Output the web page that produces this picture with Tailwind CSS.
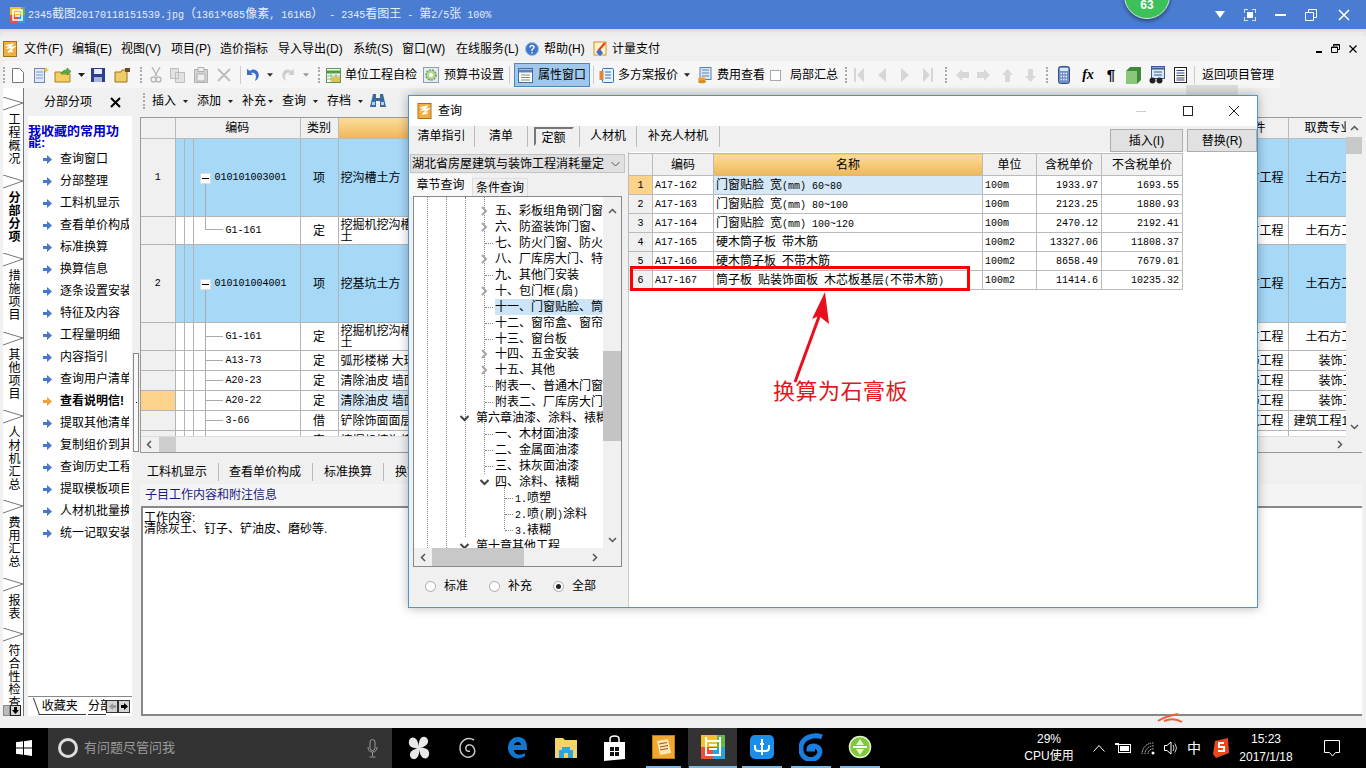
<!DOCTYPE html>
<html lang="zh">
<head>
    <meta charset="UTF-8">
    <title>2345看图王</title>
    <script src="https://cdn.jsdelivr.net/npm/@tailwindcss/browser@4"></script>
</head>
<body class="relative w-[1366px] h-[768px] overflow-hidden flex flex-col bg-[#f0f0f0] text-black text-[12px] leading-[16px] font-['Liberation_Sans','Noto_Sans_CJK_SC',sans-serif]">

    <!-- viewer title bar -->
    <div class="relative h-[29px] shrink-0 bg-[#4a7dd2] flex items-center pl-[10px] text-[#e6edfb]">
        <svg class="w-[15px] h-[16px] mr-[3px]" viewBox="0 0 15 16"><rect width="15" height="8" fill="#f3c12c"/><rect y="8" width="8" height="8" fill="#e8503c"/><rect x="8" y="8" width="7" height="8" fill="#2f9fe0"/><rect x="11" width="4" height="8" fill="#62b94a"/><path d="M3 3h9v10H3zM5 6h5M5 9h5" fill="none" stroke="#fff" stroke-width="1.5"/></svg>
        <span data-mix class="whitespace-pre">2345截图20170118151539.jpg（1361×685像素, 161KB） - 2345看图王 - 第2/5张 100%</span>
        <div class="ml-auto flex items-center h-full">
            <svg class="w-[10px] h-[7px] mr-[19px]" viewBox="0 0 10 7"><path d="M0 0h10L5 7z" fill="#fff"/></svg>
            <svg class="w-[12px] h-[12px] mr-[19px]" viewBox="0 0 12 12"><path d="M0 4V0h4M8 0h4v4M12 8v4H8M4 12H0V8" fill="none" stroke="#fff" stroke-width="1.5"/><rect x="3" y="3" width="6" height="6" fill="#fff"/></svg>
            <span class="w-[11px] h-[2px] bg-white mr-[19px]"></span>
            <svg class="w-[12px] h-[12px] mr-[21px]" viewBox="0 0 12 12"><path d="M3.500 3V.5h8v8H9M.5 3.500h8v8h-8z" fill="none" stroke="#fff"/></svg>
            <svg class="w-[12px] h-[12px] mr-[16px]" viewBox="0 0 12 12"><path d="M1 1l10 10M11 1L1 11" stroke="#fff" stroke-width="1.6"/></svg>
        </div>
    </div>
    <div class="h-[7px] shrink-0 bg-[#ececec] shadow-[inset_0_2px_3px_rgba(0,0,0,.08)]"></div>

    <!-- app window -->
    <div class="h-[692px] shrink-0 pl-[3px] pr-[4px] flex flex-col">
        <!-- menu -->
        <div class="h-[25px] shrink-0 flex items-center">
            <svg class="w-[14px] h-[16px]" viewBox="0 0 14 16"><rect x=".5" y=".5" width="13" height="15" fill="#f0b040" stroke="#a8701c"/><path d="M3 5l7-2-5 4 6-1-6 5 5-1" fill="none" stroke="#fff" stroke-width="1.5"/></svg>
            <span class="w-[7px]"></span>
            <span class="w-[48px]">文件(F)</span>
            <span class="w-[49px]">编辑(E)</span>
            <span class="w-[50px]">视图(V)</span>
            <span class="w-[49px]">项目(P)</span>
            <span class="w-[58px]">造价指标</span>
            <span class="w-[75px]">导入导出(D)</span>
            <span class="w-[49px]">系统(S)</span>
            <span class="w-[54px]">窗口(W)</span>
            <span class="w-[69px]">在线服务(L)</span>
            <svg class="w-[14px] h-[14px] mr-[5px]" viewBox="0 0 14 14"><circle cx="7" cy="7" r="6.5" fill="#3f76c8" stroke="#9dbbe8"/><path d="M5 5.500Q5 3.500 7 3.500T9 5.500Q9 6.500 7 7.500V9M7 10v1.500" fill="none" stroke="#fff" stroke-width="1.3"/></svg>
            <span class="w-[49px]">帮助(H)</span>
            <svg class="w-[16px] h-[16px] mr-[3px]" viewBox="0 0 16 16"><rect x="1" y="1" width="12" height="13" fill="#fff3c8" stroke="#d09030"/><path d="M12 2L5 10" stroke="#e04020" stroke-width="2"/><path d="M3 11l4 4 3-3-3-4z" fill="#3a70d0"/></svg>
            <span>计量支付</span>
            <div class="ml-auto mr-[5px] flex items-center gap-[9px]">
                <span class="w-[6px] h-[2px] mt-[6px] bg-black"></span>
                <svg class="w-[9px] h-[9px]" viewBox="0 0 9 9"><path d="M2.500 2V.5h6v5H7M.5 3h6v5.500h-6z" fill="none" stroke="#000"/><path d="M.5 3.500h6M2.500 1h6" stroke="#000"/></svg>
                <svg class="w-[8px] h-[8px]" viewBox="0 0 8 8"><path d="M.5.5l7 7M7.500.5l-7 7" stroke="#000" stroke-width="1.200"/></svg>
            </div>
        </div>

        <!-- main toolbar -->
        <div class="h-[27px] shrink-0 flex items-center w-[1277px] bg-[#f6f6f6] pt-[1px]">
            <span class="w-[3px] h-[16px] border-l-2 border-dotted border-[#aaa]"></span>
            <span class="w-[23px] flex justify-center"><svg class="w-[12px] h-[15px]" viewBox="0 0 12 15"><path d="M.5.5h7l4 4v10H.5z" fill="#fff" stroke="#777"/></svg></span>
            <span class="w-[23px] flex justify-center"><svg class="w-[16px] h-[16px]" viewBox="0 0 16 16"><rect x="1.500" y="1.500" width="10" height="14" fill="#dfe9f8" stroke="#6e86b0"/><path d="M3 5h7M3 8h7M3 11h7" stroke="#7f9cc8"/><path d="M13 0l1 2 2 1-2 1-1 2-1-2-2-1 2-1z" fill="#f5c030"/></svg></span>
            <span class="w-[22px] flex justify-center"><svg class="w-[18px] h-[16px]" viewBox="0 0 18 16"><path d="M1 5h6l1 2h8v8H1z" fill="#f3cf62" stroke="#a88020"/><path d="M7 7c1-3 3-4 6-4V1l4 3.500L13 8V6c-2 0-4 0-6 1z" fill="#58b040" stroke="#2e7a20" stroke-width=".6"/></svg></span>
            <span class="w-[14px] flex justify-center"><svg class="w-[7px] h-[4px]" viewBox="0 0 7 4"><path d="M0 0h7L3.500 4z" fill="#222"/></svg></span>
            <span class="w-[20px] flex justify-center"><svg class="w-[14px] h-[14px]" viewBox="0 0 14 14"><path d="M0 0h14v14H0z" fill="#2a3f90"/><rect x="3" y="1" width="8" height="5" fill="#e8ecf8"/><rect x="3" y="9" width="8" height="5" fill="#a8b4d8"/></svg></span>
            <span class="w-[28px] flex justify-center"><svg class="w-[17px] h-[15px]" viewBox="0 0 17 15"><path d="M1 4h6l1-2h5v12H1z" fill="#f0cc68" stroke="#9a7418"/><path d="M11 0h5v4h-5z" fill="#6a4c20"/></svg></span>
            <span class="w-[10px] flex justify-center"><span class="h-[16px] border-l-2 border-dotted border-[#aaa]"></span></span>
            <span class="w-[20px] flex justify-center"><svg class="w-[12px] h-[16px]" viewBox="0 0 12 16"><path d="M2 0l5 9M10 0L5 9" stroke="#b8b8b8" stroke-width="1.400"/><circle cx="3.500" cy="12.500" r="2.500" fill="none" stroke="#b8b8b8" stroke-width="1.400"/><circle cx="8.500" cy="12.500" r="2.500" fill="none" stroke="#b8b8b8" stroke-width="1.400"/></svg></span>
            <span class="w-[23px] flex justify-center"><svg class="w-[15px] h-[15px]" viewBox="0 0 15 15"><path d="M.5.5h8v10h-8zM5.500 4.500h9v10h-9z" fill="#e2e2e2" stroke="#bdbdbd"/></svg></span>
            <span class="w-[23px] flex justify-center"><svg class="w-[14px] h-[16px]" viewBox="0 0 14 16"><path d="M.5 2.500h13v13H.5z" fill="#d4d4d4" stroke="#b0b0b0"/><path d="M4 .5h6v4H4zM3 7h8v7H3z" fill="#eee" stroke="#b0b0b0"/></svg></span>
            <span class="w-[24px] flex justify-center"><svg class="w-[14px] h-[14px]" viewBox="0 0 14 14"><path d="M1 1l12 12M13 1L1 13" stroke="#bcbcbc" stroke-width="1.800"/></svg></span>
            <span class="w-[8px] flex justify-center"><span class="h-[18px] border-l border-[#ccc]"></span></span>
            <span class="w-[18px] flex justify-center"><svg class="w-[14px] h-[14px]" viewBox="0 0 14 14"><path d="M1 1v6h6L5 5c3-1 5 1 5 4l-1 4c4-2 5-7 2-10-2-2-5-2-7 0z" fill="#3a6fc8"/></svg></span>
            <span class="w-[16px] flex justify-center"><svg class="w-[6px] h-[4px]" viewBox="0 0 7 4"><path d="M0 0h7L3.500 4z" fill="#333"/></svg></span>
            <span class="w-[19px] flex justify-center"><svg class="w-[14px] h-[14px]" viewBox="0 0 14 14"><path d="M13 1v6H7l2-2C6 4 4 6 4 9l1 4C1 11 0 6 3 3c2-2 5-2 7 0z" fill="#cfcfcf"/></svg></span>
            <span class="w-[17px] flex justify-center"><svg class="w-[6px] h-[4px]" viewBox="0 0 7 4"><path d="M0 0h7L3.500 4z" fill="#999"/></svg></span>
            <span class="w-[10px] flex justify-center"><span class="h-[16px] border-l-2 border-dotted border-[#aaa]"></span></span>
            <span class="w-[18px] flex justify-center"><svg class="w-[15px] h-[15px]" viewBox="0 0 15 15"><rect x=".5" y=".5" width="14" height="14" fill="#fff" stroke="#5a9a50"/><path d="M.5 4h14" stroke="#4a9a40" stroke-width="3"/><path d="M5 4v10M10 4v10M1 8h13M1 11h13" stroke="#88b880"/><rect x="6" y="9" width="8" height="5" fill="#e4c050"/></svg></span>
            <span class="ml-[3px] w-[72px] whitespace-nowrap">单位工程自检</span>
            <span class="ml-[2px] w-[24px] flex justify-center"><svg class="w-[16px] h-[16px]" viewBox="0 0 16 16"><rect x=".5" y=".5" width="15" height="15" fill="#e4eef0" stroke="#8aa0a8"/><circle cx="8" cy="8" r="5" fill="#bcd890" stroke="#6a9a70" stroke-width="1.500" stroke-dasharray="2 1"/><circle cx="8" cy="8" r="2" fill="#fff"/></svg></span>
            <span class="ml-[1px] w-[60px] whitespace-nowrap">预算书设置</span>
            <span class="w-[10px] flex justify-center"><span class="h-[18px] border-l border-[#ccc]"></span></span>
            <span class="w-[76px] h-[24px] flex items-center bg-[#9fc8ec] border border-[#4a88c0] pl-[3px]">
                <svg class="w-[15px] h-[15px] mr-[5px]" viewBox="0 0 15 15"><rect x=".5" y=".5" width="14" height="14" fill="#fff" stroke="#4a6a9a"/><path d="M1 3h13" stroke="#5a80c0" stroke-width="3"/><path d="M3 7h9M3 9.500h9M3 12h9" stroke="#8a8a70"/></svg>
                <span>属性窗口</span>
            </span>
            <span class="w-[7px] flex justify-center"><span class="h-[18px] border-l border-[#ccc]"></span></span>
            <span class="w-[18px] flex justify-center"><svg class="w-[15px] h-[15px]" viewBox="0 0 15 15"><rect x="3.500" y=".5" width="11" height="14" rx="1" fill="#eaf2fb" stroke="#2f6fc0"/><path d="M6 4h6M6 7h6M6 10h6" stroke="#2f6fc0"/><rect x=".5" y="3" width="4" height="9" fill="#e0883a"/></svg></span>
            <span class="ml-[3px] w-[62px] whitespace-nowrap">多方案报价</span>
            <span class="w-[14px] flex justify-center"><svg class="w-[6px] h-[4px]" viewBox="0 0 7 4"><path d="M0 0h7L3.500 4z" fill="#222"/></svg></span>
            <span class="ml-[1px] w-[18px] flex justify-center"><svg class="w-[15px] h-[17px]" viewBox="0 0 15 17"><rect x="3" y=".5" width="11" height="12" fill="#dce8f6" stroke="#5a80b0"/><path d="M5 3h7M5 6h7M5 9h7" stroke="#5a80b0"/><ellipse cx="5" cy="12" rx="4" ry="1.800" fill="#e8a830"/><ellipse cx="5" cy="14.500" rx="4" ry="1.800" fill="#d89020"/></svg></span>
            <span class="ml-[4px] w-[48px] whitespace-nowrap">费用查看</span>
            <span class="ml-[5px] w-[11px] h-[11px] border border-[#aaa] bg-white"></span>
            <span class="ml-[9px] w-[48px] whitespace-nowrap">局部汇总</span>
            <span class="ml-[7px] w-[7px] h-[16px] border-l-2 border-dotted border-[#aaa]"></span>
            <span class="w-[13px] flex justify-center"><svg class="w-[11px] h-[14px]" viewBox="0 0 11 14"><path d="M1 0h2v14H1zM11 0v14L4 7z" fill="#d6d6d6"/></svg></span>
            <span class="w-[24px] ml-[5px] flex justify-center"><svg class="w-[8px] h-[14px]" viewBox="0 0 8 14"><path d="M8 0v14L0 7z" fill="#d6d6d6"/></svg></span>
            <span class="w-[22px] flex justify-center"><svg class="w-[8px] h-[14px]" viewBox="0 0 8 14"><path d="M0 0v14l8-7z" fill="#d6d6d6"/></svg></span>
            <span class="w-[24px] flex justify-center"><svg class="w-[11px] h-[14px]" viewBox="0 0 11 14"><path d="M8 0h2v14H8zM0 0v14l7-7z" fill="#d6d6d6"/></svg></span>
            <span class="w-[12px] flex justify-center"><span class="h-[16px] border-l-2 border-dotted border-[#aaa]"></span></span>
            <span class="w-[20px] flex justify-center"><svg class="w-[13px] h-[12px]" viewBox="0 0 13 12"><path d="M0 6l6-6v3h7v6H6v3z" fill="#d8d8d8"/></svg></span>
            <span class="w-[23px] flex justify-center"><svg class="w-[13px] h-[12px]" viewBox="0 0 13 12"><path d="M13 6L7 0v3H0v6h7v3z" fill="#d8d8d8"/></svg></span>
            <span class="w-[24px] flex justify-center"><svg class="w-[11px] h-[13px]" viewBox="0 0 11 13"><path d="M5.500 0L11 6H8v7H3V6H0z" fill="#d8d8d8"/></svg></span>
            <span class="w-[22px] flex justify-center"><svg class="w-[11px] h-[13px]" viewBox="0 0 11 13"><path d="M5.500 13L11 7H8V0H3v7H0z" fill="#d8d8d8"/></svg></span>
            <span class="w-[12px] flex justify-center"><span class="h-[16px] border-l-2 border-dotted border-[#aaa]"></span></span>
            <span class="w-[22px] flex justify-center"><svg class="w-[12px] h-[18px]" viewBox="0 0 12 18"><rect x=".5" y=".5" width="11" height="17" rx="2" fill="#6e8fc8" stroke="#34507e"/><rect x="2" y="2" width="8" height="3" fill="#d8e6f8"/><path d="M2.500 7.500h7M2.500 10.500h7M2.500 13.500h7" stroke="#e8eefc" stroke-width="1.500" stroke-dasharray="1.500 1"/></svg></span>
            <span class="ml-[1px] w-[24px] flex justify-center font-['Liberation_Serif',serif] italic font-bold text-[14px]">fx</span>
            <span class="w-[22px] flex justify-center font-bold text-[15px]">¶</span>
            <span class="w-[23px] flex justify-center"><svg class="w-[15px] h-[17px]" viewBox="0 0 15 17"><path d="M4 0h11v13l-4 4H0V4z" fill="#3e8a3a"/><rect y="4" width="11" height="13" fill="#88c878"/></svg></span>
            <span class="w-[24px] flex justify-center"><svg class="w-[16px] h-[18px]" viewBox="0 0 16 18"><rect x="2.500" y=".5" width="13" height="12" fill="#dce8f8" stroke="#3a5a9a"/><path d="M3 2.500h12" stroke="#3a5a9a" stroke-width="2"/><path d="M5 6h8M5 9h8" stroke="#3a5a9a"/><circle cx="3.500" cy="14.500" r="3" fill="#222"/><circle cx="10.500" cy="14.500" r="3" fill="#222"/></svg></span>
            <span class="w-[22px] flex justify-center"><svg class="w-[13px] h-[16px]" viewBox="0 0 13 16"><rect x=".5" y=".5" width="12" height="15" fill="#fff" stroke="#222"/><path d="M2.500 3.500h8M2.500 6h8M2.500 8.500h8M2.500 11h8M2.500 13h8" stroke="#2a3f90"/></svg></span>
            <span class="w-[8px] ml-[3px] h-[18px] border-l border-[#ccc]"></span>
            <span class="whitespace-nowrap">返回项目管理</span>
        </div>

        <div class="relative flex flex-1 min-h-0">
            <!-- vertical tabs -->
            <div class="w-[21px] shrink-0 h-[628px] bg-white border-r border-[#777] pt-[9px] overflow-hidden" id="sideTabs"></div>
            <span class="w-[4px] shrink-0"></span>

            <!-- scroll buttons over the bottom of the tab strip -->
            <div class="absolute left-0 top-[617px] flex">
                <span class="w-[7px] h-[11px] bg-[#bbb] border border-[#888]"></span>
                <span class="w-[11px] h-[11px] bg-[#d4d4d4] border border-[#222] flex items-center justify-center"><svg class="w-[7px] h-[7px]" viewBox="0 0 7 7"><path d="M3.500 7L0 3h2V0h3v3h2z" fill="#000"/></svg></span>
            </div>

            <!-- favourites panel -->
            <div class="w-[104px] shrink-0 flex flex-col h-[628px]">
                <div class="h-[28px] shrink-0 flex items-center pl-[16px]">
                    <span>分部分项</span>
                    <svg class="ml-[18px] w-[11px] h-[11px]" viewBox="0 0 11 11"><path d="M1 1l9 9M10 1l-9 9" stroke="#000" stroke-width="2"/></svg>
                </div>
                <div class="flex-1 bg-white pt-[9px] flex flex-col overflow-hidden">
                    <div class="h-[23px] shrink-0 overflow-hidden text-[13px] leading-[12px] font-bold text-[#0000c8]">我收藏的常用功能:</div>
                    <div id="favList" class="flex-1"></div>
                    <div class="h-[20px] shrink-0 flex items-center pl-[8px] border-t border-[#888]">
                        <span class="relative whitespace-nowrap px-[5px] border-b border-l border-[#333] skew-x-[20deg] bg-white"><span class="block skew-x-[-20deg]">收藏夹</span></span>
                        <span class="ml-[5px] w-[18px] overflow-hidden whitespace-nowrap border-b border-[#333]">分部分项</span>
                        <span class="w-[12px] h-[13px] bg-[#d4d4d4] border border-[#333] flex items-center justify-center"><svg class="w-[7px] h-[7px]" viewBox="0 0 7 7"><path d="M0 3.500L4 0v2h3v3H4v2z" fill="#999"/></svg></span>
                        <span class="w-[12px] h-[13px] bg-[#d4d4d4] border border-[#333] flex items-center justify-center"><svg class="w-[7px] h-[7px]" viewBox="0 0 7 7"><path d="M7 3.500L3 0v2H0v3h3v2z" fill="#000"/></svg></span>
                    </div>
                </div>
            </div>

            <!-- splitter -->
            <div class="w-[8px] shrink-0 pt-[265px] pl-[1px]">
                <div class="w-[6px] h-[99px] bg-[#f8f8f8] border border-[#888] flex items-center justify-center"><span class="w-[1px] h-[1px] bg-black"></span></div>
            </div>

            <!-- content -->
            <div class="w-[1222px] shrink-0 flex flex-col">
                <div class="h-[29px] shrink-0 flex items-center pb-[3px]">
                    <span class="w-[3px] h-[16px] ml-[3px] border-l-2 border-dotted border-[#aaa]"></span>
                    <span class="ml-[6px]">插入</span>
                    <svg class="ml-[7px] w-[5px] h-[3px]" viewBox="0 0 7 4"><path d="M0 0h7L3.500 4z" fill="#222"/></svg>
                    <span class="ml-[9px]">添加</span>
                    <svg class="ml-[7px] w-[5px] h-[3px]" viewBox="0 0 7 4"><path d="M0 0h7L3.500 4z" fill="#222"/></svg>
                    <span class="ml-[9px]">补充</span>
                    <svg class="ml-[2px] w-[5px] h-[3px]" viewBox="0 0 7 4"><path d="M0 0h7L3.500 4z" fill="#222"/></svg>
                    <span class="ml-[9px]">查询</span>
                    <svg class="ml-[7px] w-[5px] h-[3px]" viewBox="0 0 7 4"><path d="M0 0h7L3.500 4z" fill="#222"/></svg>
                    <span class="ml-[9px]">存档</span>
                    <svg class="ml-[7px] w-[5px] h-[3px]" viewBox="0 0 7 4"><path d="M0 0h7L3.500 4z" fill="#222"/></svg>
                    <svg class="ml-[7px] w-[16px] h-[14px]" viewBox="0 0 16 14"><path d="M3 0h3v4h4V0h3l3 13h-6V7H6v6H0z" fill="#3a6a9a"/><path d="M2 8h3v3H2zM11 8h3v3h-3z" fill="#b8d0e8"/></svg>
                </div>

                <!-- main grid -->
                <div class="h-[336px] shrink-0 flex border-t border-l border-b border-[#999]">
                    <div class="w-[1205px] flex flex-col">
                        <div class="h-[318px] overflow-hidden">
                            <table class="table-fixed border-collapse w-[1205px]">
                                <colgroup>
                                    <col class="w-[34px]"><col class="w-[9px]"><col class="w-[9px]"><col class="w-[107px]"><col class="w-[38px]"><col class="w-[812px]"><col class="w-[138px]"><col class="w-[58px]">
                                </colgroup>
                                <thead>
                                    <tr class="h-[20px] bg-[#f0f0f0]">
                                        <th class="font-normal border-r border-b border-[#bbb]"></th>
                                        <th class="font-normal border-b border-[#bbb]" colspan="2"></th>
                                        <th class="font-normal border-r border-b border-[#bbb] pr-[18px] pt-[1px]">编码</th>
                                        <th class="font-normal border-r border-b border-[#bbb] pt-[1px]">类别</th>
                                        <th class="font-normal border-r border-b border-[#bbb] pt-[1px] bg-gradient-to-b from-[#fbdc98] to-[#f0b75a]">名称</th>
                                        <th class="font-normal border-r border-b border-[#bbb] pt-[1px] text-right pr-[22px]">取费文件</th>
                                        <th class="font-normal border-b border-[#bbb] pt-[1px] text-left pl-[16px] whitespace-nowrap overflow-hidden">取费专业</th>
                                    </tr>
                                </thead>
                                <tbody id="mainRows"></tbody>
                            </table>
                        </div>
                        <div class="flex-1 flex items-center bg-[#f0f0f0] border-t border-[#ddd]">
                            <svg class="ml-[5px] w-[6px] h-[9px]" viewBox="0 0 6 9"><path d="M5 1L1.500 4.500 5 8" fill="none" stroke="#555" stroke-width="1.500"/></svg>
                            <span class="ml-[7px] w-[17px] h-full bg-[#cdcdcd]"></span>
                            <svg class="ml-auto mr-[3px] w-[6px] h-[9px]" viewBox="0 0 6 9"><path d="M1 1l3.500 3.500L1 8" fill="none" stroke="#555" stroke-width="1.500"/></svg>
                        </div>
                    </div>
                    <div class="w-[16px] bg-[#f0f0f0] flex flex-col items-center pt-[7px]">
                        <svg class="w-[9px] h-[6px]" viewBox="0 0 9 6"><path d="M1 5l3.500-3.500L8 5" fill="none" stroke="#555" stroke-width="1.500"/></svg>
                        <span class="mt-[6px] w-full h-[17px] bg-[#c8c8c8]"></span>
                        <svg class="mt-[270px] w-[9px] h-[6px]" viewBox="0 0 9 6"><path d="M1 1l3.500 3.500L8 1" fill="none" stroke="#555" stroke-width="1.500"/></svg>
                    </div>
                </div>

                <!-- detail tabs -->
                <div class="h-[31px] shrink-0 flex items-center pt-[7px]">
                    <span class="pl-[7px] pr-[11px] border-r border-[#bbb] h-[18px] leading-[18px]">工料机显示</span>
                    <span class="pl-[10px] pr-[11px] border-r border-[#bbb] h-[18px] leading-[18px]">查看单价构成</span>
                    <span class="pl-[11px] pr-[11px] border-r border-[#bbb] h-[18px] leading-[18px]">标准换算</span>
                    <span class="pl-[11px]">换算信息</span>
                </div>
                <div class="h-[22px] shrink-0 flex items-center pl-[5px] bg-[#f4f4f4] text-[#1a1a80]">子目工作内容和附注信息</div>
                <div class="h-[210px] shrink-0 ml-[1px] bg-white border-t-2 border-l-2 border-b-2 border-[#888] text-[12px] leading-[11px] pt-[5px] pl-[1px]">
                    <div>工作内容:</div>
                    <div>清除灰土、钉子、铲油皮、磨砂等.</div>
                </div>
            </div>
        </div>
    </div>

    <!-- taskbar -->
    <div class="h-[40px] shrink-0 bg-black flex items-stretch text-white">
        <div class="w-[48px] flex items-center justify-center">
            <svg class="w-[16px] h-[16px]" viewBox="0 0 16 16"><path d="M0 2.300l7-1v6.200H0zM8 1.200L16 0v7.500H8zM0 8.500h7v6.200l-7-1zM8 8.500h8V16l-8-1.200z" fill="#fff"/></svg>
        </div>
        <div class="w-[344px] bg-[#333] flex items-center pl-[10px] text-[#9a9a9a]">
            <span class="w-[20px] h-[20px] rounded-full border-[3px] border-[#ddd]"></span>
            <span class="ml-[6px] text-[13px]">有问题尽管问我</span>
            <svg class="ml-auto mr-[14px] w-[11px] h-[19px]" viewBox="0 0 11 19"><rect x="3" y=".5" width="5" height="11" rx="2.500" fill="none" stroke="#999"/><path d="M1 8q0 5 4.500 5T10 8M5.500 13v4M2.500 18h6" fill="none" stroke="#999"/></svg>
        </div>
        <span class="w-[2px]"></span>
        <span class="w-[49px] flex items-center justify-center"><svg class="w-[22px] h-[24px]" viewBox="0 0 22 24"><path d="M11 12C4 13 0 10 1 5s9-6 10 7zM11 12c7-1 11 2 10 7s-9 6-10-7zM11 12C10 5 13 0 17 1s6 9-6 11zM11 12c1 7-2 12-6 11s-6-9 6-11z" fill="#e8e8e8"/></svg></span>
        <span class="w-[49px] flex items-center justify-center"><svg class="w-[20px] h-[24px]" viewBox="0 0 20 24"><path d="M16 4C9 0 2 5 2 12s6 10 10 9 6-5 4-9-7-4-8-1 1 5 4 4" fill="none" stroke="#ccc" stroke-width="1.500"/></svg></span>
        <span class="w-[49px] flex items-center justify-center"><svg class="w-[20px] h-[24px]" viewBox="0 0 20 24"><path d="M18 20c-3 2-7 3-10 2S1 17 1 12 4 1 11 1s9 5 9 11v2H7c0 5 7 6 11 3zM7 9h7c0-4-6-4-7 0z" fill="#0f78d4"/></svg></span>
        <span class="w-[49px] flex items-center justify-center"><svg class="w-[22px] h-[20px]" viewBox="0 0 22 20"><path d="M0 0h8l2 2h12v18H0z" fill="#f4d36a"/><path d="M7 9h8v3h3v8H4v-8h3z" fill="#2ea6dc"/><rect x="9" y="15" width="4" height="5" fill="#f4d36a"/></svg></span>
        <span class="w-[49px] flex items-center justify-center"><svg class="w-[21px] h-[26px]" viewBox="0 0 21 26"><path d="M0 7h21v17l-21 2z" fill="#fff"/><path d="M6 8V4q0-3 4.500-3T15 4v4" fill="none" stroke="#fff" stroke-width="1.500"/><path d="M6 12h4v4H6zM11 12h4v4h-4zM6 17h4v4H6zM11 17h4v4h-4z" fill="#111"/></svg></span>
        <span class="w-[49px] flex flex-col items-center"><span class="flex-1 flex items-center"><svg class="w-[23px] h-[24px]" viewBox="0 0 23 24"><rect x=".5" y=".5" width="22" height="23" fill="#f0a830" stroke="#c07810"/><path d="M5 6l11-2 3 14-11 2z" fill="#fbe9b4"/><path d="M7 9l8-1.500M8 12l8-1.500M8 15l8-1.500" stroke="#b04a20"/></svg></span><span class="w-[35px] h-[2px] bg-[#7ab8e8]"></span></span>
        <span class="w-[49px] flex flex-col items-center bg-[#333]"><span class="flex-1 flex items-center"><svg class="w-[24px] h-[24px]" viewBox="0 0 24 24"><rect width="24" height="12" fill="#f3c12c"/><rect y="12" width="12" height="12" fill="#e8503c"/><rect x="12" y="12" width="12" height="12" fill="#2f9fe0"/><rect x="16" width="8" height="12" fill="#62b94a"/><path d="M5 2v4h14V2M5 6v14h14V6M8 10h8M8 14h8" fill="none" stroke="#fff" stroke-width="2"/></svg></span><span class="w-[48px] h-[2px] bg-[#7ab8e8]"></span></span>
        <span class="w-[49px] flex flex-col items-center"><span class="flex-1 flex items-center"><svg class="w-[24px] h-[24px]" viewBox="0 0 24 24"><rect width="24" height="24" rx="5" fill="#1a8ee8"/><path d="M12 4v16M5 10v3q0 3 3.500 3h7Q19 16 19 13v-3M12 9h-2M12 9h2" fill="none" stroke="#fff" stroke-width="2"/></svg></span><span class="w-[40px] h-[2px] bg-[#7ab8e8]"></span></span>
        <span class="w-[49px] flex flex-col items-center"><span class="flex-1 flex items-center"><svg class="w-[24px] h-[28px]" viewBox="0 0 24 28"><path d="M23 4C15 1 3 4 2 14s7 14 13 12 8-9 3-12c-3-2-8-1-8 2h6" fill="none" stroke="#1a7ee0" stroke-width="5"/></svg></span><span class="w-[40px] h-[2px] bg-[#7ab8e8]"></span></span>
        <span class="w-[49px] flex flex-col items-center"><span class="flex-1 flex items-center"><svg class="w-[24px] h-[26px]" viewBox="0 0 24 26"><circle cx="12" cy="13" r="10.500" fill="#7ec83c" stroke="#e4f4cc" stroke-width="1.500"/><path d="M5 13h14" stroke="#fff" stroke-width="2"/><path d="M12 5l4 6H8zM12 21l-4-6h8z" fill="#e4f4cc"/></svg></span><span class="w-[40px] h-[2px] bg-[#7ab8e8]"></span></span>

        <div class="ml-auto flex items-center">
            <div class="w-[70px] flex flex-col items-center leading-[17px] text-[12px] pr-[10px]"><span>29%</span><span>CPU使用</span></div>
            <span class="w-[20px] flex justify-center"><svg class="w-[12px] h-[7px]" viewBox="0 0 12 7"><path d="M.5 6.500l5.500-6 5.500 6" fill="none" stroke="#fff"/></svg></span>
            <span class="w-[24px] ml-[2px] flex justify-center"><svg class="w-[16px] h-[12px]" viewBox="0 0 16 12"><rect x="3.500" y="2.500" width="12" height="8" fill="none" stroke="#fff"/><rect x="5" y="4" width="9" height="5" fill="#fff"/><path d="M0 1h4v2H0" fill="#fff"/></svg></span>
            <span class="w-[24px] ml-[1px] flex justify-center"><svg class="w-[14px] h-[13px]" viewBox="0 0 14 13"><path d="M1 12a11 11 0 0 1 12-11M4 12a8 8 0 0 1 9-8M7 12a5 5 0 0 1 6-5" fill="none" stroke="#ccc" stroke-dasharray="1.500 .8"/><circle cx="12" cy="11" r="1.500" fill="#fff"/></svg></span>
            <span class="w-[22px] flex justify-center"><svg class="w-[15px] h-[14px]" viewBox="0 0 15 14"><path d="M.5 4.500H3L7 1v12L3 9.500H.5z" fill="none" stroke="#fff"/><path d="M9 4q2 3 0 6M11 2.500q3 4.500 0 9" fill="none" stroke="#ccc"/></svg></span>
            <span class="w-[24px] text-center text-[14px]">中</span>
            <span class="w-[29px] flex justify-center"><svg class="w-[16px] h-[20px]" viewBox="0 0 16 20"><path d="M2 3l13-3 1 15-13 5-3-4z" fill="#e8481c"/><path d="M11 5H6v4h5v4H5" fill="none" stroke="#fff" stroke-width="2"/></svg></span>
            <div class="w-[62px] flex flex-col items-center leading-[18px] text-[12px]"><span>15:23</span><span>2017/1/18</span></div>
            <span class="w-[69px] flex justify-center"><svg class="w-[16px] h-[17px]" viewBox="0 0 16 17"><path d="M.5.5h15v12h-4l-3 3.500-3-3.500h-5z" fill="none" stroke="#fff"/></svg></span>
        </div>
    </div>

    <!-- badge sitting over the viewer title bar -->
    <div class="absolute left-[1124px] top-[-27px] w-[46px] h-[46px] rounded-full bg-[#3cc05a] border border-[#d8e8d8] shadow-[0_2px_4px_rgba(0,0,0,.45)] flex items-end justify-center pb-[5px] text-white font-bold text-[12px]">63</div>
    <div class="absolute left-[1186px] top-[85px] w-[52px] h-[10px] bg-[#dcdcdc]"></div>

    <!-- query dialog -->
    <div class="absolute left-[408px] top-[95px] w-[850px] h-[513px] bg-white border border-[#4f94cf] shadow-[0_0_10px_rgba(0,0,0,.3)] flex flex-col">
        <div class="h-[30px] shrink-0 flex items-center pl-[7px]">
            <svg class="w-[17px] h-[16px]" viewBox="0 0 14 16"><rect x=".5" y=".5" width="13" height="15" fill="#f0b040" stroke="#a8701c"/><path d="M3 5l7-2-5 4 6-1-6 5 5-1" fill="none" stroke="#fff" stroke-width="1.500"/></svg>
            <span class="ml-[5px]">查询</span>
            <div class="ml-auto flex items-center">
                <span class="w-[10px] h-[1px] bg-[#ccc] mr-[37px]"></span>
                <span class="w-[10px] h-[10px] border border-[#222] mr-[36px]"></span>
                <svg class="w-[10px] h-[10px] mr-[18px]" viewBox="0 0 10 10"><path d="M0 0l10 10M10 0L0 10" stroke="#222"/></svg>
            </div>
        </div>
        <div class="h-[26px] shrink-0 bg-[#f0f0f0] flex items-start">
            <span class="w-[66px] h-[21px] leading-[20px] text-center border-r border-[#bbb]">清单指引</span>
            <span class="w-[53px] h-[21px] leading-[20px] text-center border-r border-[#bbb]">清单</span>
            <span class="w-[52px] h-[21px] flex items-center justify-center border-r border-[#bbb]"><span class="w-[40px] h-[19px] leading-[18px] text-center border-2 border-t-[#777] border-l-[#777] border-r-[#eee] border-b-[#eee]">定额</span></span>
            <span class="w-[57px] h-[21px] leading-[20px] text-center border-r border-[#bbb]">人材机</span>
            <span class="w-[83px] h-[21px] leading-[20px] text-center border-r border-[#bbb]">补充人材机</span>
            <span class="ml-auto w-[73px] h-[23px] leading-[22px] mt-[3px] text-center bg-[#e1e1e1] border border-[#adadad]">插入(I)</span>
            <span class="ml-[4px] w-[70px] h-[23px] leading-[22px] mt-[3px] text-center bg-[#e1e1e1] border border-[#adadad]">替换(R)</span>
        </div>
        <div class="flex-1 flex min-h-0">
            <!-- left pane -->
            <div class="w-[220px] shrink-0 bg-[#f0f0f0] flex flex-col border-r border-[#ccc]">
                <div class="h-[19px] mt-[2px] ml-[1px] w-[215px] shrink-0 bg-[#e0e0e0] border border-[#c4c4c4] flex items-center pl-[1px] whitespace-nowrap overflow-hidden">
                    <span>湖北省房屋建筑与装饰工程消耗量定</span>
                    <svg class="ml-auto mr-[4px] w-[9px] h-[6px] shrink-0" viewBox="0 0 9 6"><path d="M.5 1l4 4 4-4" fill="none" stroke="#555"/></svg>
                </div>
                <div class="h-[23px] shrink-0 flex items-end">
                    <span class="w-[63px] h-[22px] leading-[23px] text-center bg-[#f8f8f8]">章节查询</span>
                    <span class="w-[56px] h-[18px] leading-[19px] text-center border border-b-0 border-[#ddd]">条件查询</span>
                </div>
                <div class="ml-[4px] w-[209px] h-[371px] shrink-0 bg-white border border-[#888] flex flex-col">
                    <div class="flex-1 flex min-h-0">
                        <div id="tree" class="relative w-[189px] overflow-hidden pt-[6px]">
                            <span class="absolute left-[13px] top-0 h-full border-l border-dotted border-[#888]"></span>
                            <span class="absolute left-[32px] top-0 h-full border-l border-dotted border-[#888]"></span>
                            <span class="absolute left-[51px] top-0 h-[340px] border-l border-dotted border-[#888]"></span>
                            <span class="absolute left-[70px] top-0 h-[277px] border-l border-dotted border-[#888]"></span>
                            <span class="absolute left-[90px] top-[290px] h-[42px] border-l border-dotted border-[#888]"></span>
                        </div>
                        <div class="flex-1 bg-[#f0f0f0] flex flex-col items-center pt-[11px]">
                            <svg class="w-[9px] h-[6px]" viewBox="0 0 9 6"><path d="M1 5l3.500-3.500L8 5" fill="none" stroke="#555" stroke-width="1.500"/></svg>
                            <span class="mt-[137px] w-full h-[90px] bg-[#c4c4c4]"></span>
                            <svg class="mt-[96px] w-[9px] h-[6px]" viewBox="0 0 9 6"><path d="M1 1l3.500 3.500L8 1" fill="none" stroke="#555" stroke-width="1.500"/></svg>
                        </div>
                    </div>
                    <div class="h-[18px] shrink-0 bg-[#f0f0f0] flex items-center pr-[23px]">
                        <svg class="ml-[6px] w-[6px] h-[9px]" viewBox="0 0 6 9"><path d="M5 1L1.500 4.500 5 8" fill="none" stroke="#555" stroke-width="1.500"/></svg>
                        <span class="ml-[6px] w-[92px] h-full bg-[#c8c8c8]"></span>
                        <svg class="ml-auto w-[6px] h-[9px]" viewBox="0 0 6 9"><path d="M1 1l3.500 3.500L1 8" fill="none" stroke="#555" stroke-width="1.500"/></svg>
                    </div>
                </div>
                <div class="flex-1 flex items-center pl-[16px] pb-[2px]">
                    <span class="w-[11px] h-[11px] rounded-full border border-[#aaa] bg-white"></span>
                    <span class="ml-[8px] w-[45px]">标准</span>
                    <span class="w-[11px] h-[11px] rounded-full border border-[#aaa] bg-white"></span>
                    <span class="ml-[8px] w-[45px]">补充</span>
                    <span class="w-[11px] h-[11px] rounded-full border border-[#aaa] bg-white flex items-center justify-center"><span class="w-[5px] h-[5px] rounded-full bg-[#222]"></span></span>
                    <span class="ml-[8px]">全部</span>
                </div>
            </div>
            <!-- results -->
            <div class="flex-1 pt-[1px]">
                <table class="table-fixed border-collapse w-[554px] -ml-[1px]">
                    <colgroup><col class="w-[24px]"><col class="w-[61px]"><col class="w-[269px]"><col class="w-[54px]"><col class="w-[65px]"><col class="w-[81px]"></colgroup>
                    <thead>
                        <tr class="h-[22px] bg-[#f0f0f0]">
                            <th class="font-normal border border-[#bbb]"></th>
                            <th class="font-normal border border-[#bbb]">编码</th>
                            <th class="font-normal border border-[#bbb] bg-gradient-to-b from-[#fbdc98] to-[#f0b75a]">名称</th>
                            <th class="font-normal border border-[#bbb]">单位</th>
                            <th class="font-normal border border-[#bbb]">含税单价</th>
                            <th class="font-normal border border-[#bbb]">不含税单价</th>
                        </tr>
                    </thead>
                    <tbody id="quotaRows"></tbody>
                </table>
            </div>
        </div>
    </div>

    <!-- hand drawn annotation on top of the screenshot -->
    <div class="absolute left-[630px] top-[266px] w-[340px] h-[25px] border-[3px] border-[#f00]"></div>
    <svg class="absolute left-[785px] top-[288px] w-[50px] h-[100px]" viewBox="0 0 50 100"><path d="M10 94L35 26" stroke="#e8101c" stroke-width="3"/><path d="M40 4L44 36 34 28 27 31z" fill="#e8101c"/></svg>
    <div class="absolute left-[773px] top-[378px] text-[22px] leading-[28px] tracking-[0.5px] text-[#e0181c]">换算为石膏板</div>
    <svg class="absolute left-[1156px] top-[712px] w-[30px] h-[16px]" viewBox="0 0 30 16"><path d="M2 9Q10 4 22 2M8 9q10-4 18 1" fill="none" stroke="#f0603a" stroke-width="2"/></svg>

    <script>
        const mono = "font-['Liberation_Mono'] text-[10px]";
        const mix = s => s.replace(/[\x20-\x7e]+/g, m => `<span class="font-['Liberation_Mono'] text-[10px]">${m}</span>`);
        document.querySelectorAll('[data-mix]').forEach(el => { el.innerHTML = mix(el.textContent); });

        // vertical tabs on the far left
        const tabs = [['工程概况', 'h-[78px]', ''], ['分部分项', 'h-[78px]', 'font-bold'], ['措施项目', 'h-[79px]', ''], ['其他项目', 'h-[78px]', ''], ['人材机汇总', 'h-[90px]', ''], ['费用汇总', 'h-[78px]', ''], ['报表', 'h-[50px]', ''], ['符合性检查', 'h-[88px]', '']];
        document.getElementById('sideTabs').innerHTML = tabs.map(([t, h, w]) => `
            <div class="relative ${h} pt-[16px] flex justify-center overflow-hidden">
                <svg class="absolute left-0 top-0 w-[20px] h-[14px]" viewBox="0 0 20 14"><path d="M0 13L20 6M0 0l20 6" fill="none" stroke="#777"/></svg>
                <span class="[writing-mode:vertical-rl] tracking-[1px] leading-[16px] ${w}">${t}</span>
            </div>`).join('');

        // favourites list
        const favs = ['查询窗口', '分部整理', '工料机显示', '查看单价构成', '标准换算', '换算信息', '逐条设置安装', '特征及内容', '工程量明细', '内容指引', '查询用户清单', '查看说明信!', '提取其他清单', '复制组价到其', '查询历史工程', '提取模板项目', '人材机批量换', '统一记取安装'];
        document.getElementById('favList').innerHTML = favs.map(t => {
            const on = t === '查看说明信!';
            return `<div class="h-[22px] flex items-center pl-[15px] whitespace-nowrap ${on ? 'font-bold' : ''}">
                <svg class="w-[9px] h-[9px] shrink-0 mr-[8px]" viewBox="0 0 9 9"><path d="M0 3h4V0l5 4.500L4 9V6H0z" fill="${on ? '#f0a040' : '#4a78c8'}"/></svg><span class="w-[69px] shrink-0 overflow-hidden">${t}</span></div>`;
        }).join('');

        // main grid rows: height, no, code, type, name, professional col, last col pad
        const cell = 'border-r border-b border-[#b4b4b4] overflow-hidden whitespace-nowrap pt-[2px]';
        const main = [
            ['h-[78px]', '1', '010101003001', '项', '挖沟槽土方', '土石方工程', 'pl-[17px]', '土石方工程', 1],
            ['h-[28px]', '', 'G1-161', '定', '挖掘机挖沟槽<br>土', '土石方工程', 'pl-[17px]', '土石方工程', 0, 'end'],
            ['h-[78px]', '2', '010101004001', '项', '挖基坑土方', '土石方工程', 'pl-[17px]', '土石方工程', 1],
            ['h-[28px]', '', 'G1-161', '定', '挖掘机挖沟槽<br>土', '土石方工程', 'pl-[17px]', '土石方工程', 0, 'mid'],
            ['h-[20px]', '', 'A13-73', '定', '弧形楼梯 大理石', '装饰工程', 'pl-[30px]', '装饰工程', 0, 'mid'],
            ['h-[20px]', '', 'A20-23', '定', '清除油皮 墙面', '装饰工程', 'pl-[30px]', '装饰工程', 0, 'mid'],
            ['h-[20px]', '', 'A20-22', '定', '清除油皮 墙面', '装饰工程', 'pl-[30px]', '装饰工程', 0, 'mid', 1],
            ['h-[20px]', '', '3-66', '借', '铲除饰面面层', '建筑工程', 'pl-[5px]', '建筑工程1', 0, 'mid'],
            ['h-[20px]', '', 'G1-161', '定', '挖掘机挖沟槽', '', 'pl-[5px]', '', 0, 'mid']
        ];
        document.getElementById('mainRows').innerHTML = main.map(([h, no, code, type, name, prof, pad, last, group, line, cur]) => `
            <tr class="${h} ${group ? 'bg-[#a6d8f8]' : 'bg-white'}">
                <td class="${cell} text-center ${mono} ${cur ? 'bg-[#fbd38a]' : 'bg-[#f0f0f0]'}">${no}</td>
                <td class="${cell}"></td>
                <td class="${cell}"></td>
                <td class="${cell} relative ${mono}">
                    ${group ? `<span class="absolute left-[6px] top-1/2 mt-[-4px] w-[11px] h-[11px] bg-white border border-[#ddd] flex items-center justify-center"><span class="w-[7px] h-[1px] bg-black"></span></span><span class="absolute left-[11px] top-1/2 mt-[7px] h-[40px] border-l border-[#aaa]"></span><span class="pl-[21px]">${code}</span>` : ''}
                    ${line === 'end' ? `<span class="absolute left-[11px] top-0 h-1/2 w-[18px] border-l border-b border-[#aaa]"></span>` : ''}
                    ${line === 'mid' ? `<span class="absolute left-[11px] top-0 h-full border-l border-[#aaa]"></span><span class="absolute left-[11px] top-1/2 w-[18px] border-b border-[#aaa]"></span>` : ''}
                    ${group ? '' : `<span class="pl-[32px]">${code}</span>`}
                </td>
                <td class="${cell} text-center">${type}</td>
                <td class="${cell} pl-[2px] leading-[12px] ${cur ? 'bg-[#d5e8f7]' : ''}">${name}</td>
                <td class="${cell} text-right pr-[4px]">${prof}</td>
                <td class="border-b border-[#b4b4b4] overflow-hidden whitespace-nowrap pt-[2px] ${pad}">${last}</td>
            </tr>`).join('');

        // chapter tree: indent, marker, label
        const tree = [
            [1, '>', '五、彩板组角钢门窗'], [1, '>', '六、防盗装饰门窗、'], [1, '', '七、防火门窗、防火'], [1, '>', '八、厂库房大门、特'],
            [1, '', '九、其他门安装'], [1, '>', '十、包门框(扇)'], [1, '', '十一、门窗贴脸、筒', 1], [1, '', '十二、窗帘盒、窗帘'],
            [1, '', '十三、窗台板'], [1, '>', '十四、五金安装'], [1, '>', '十五、其他'], [1, '', '附表一、普通木门窗'],
            [1, '', '附表二、厂库房大门'], [0, 'v', '第六章油漆、涂料、裱糊'], [1, '', '一、木材面油漆'], [1, '', '二、金属面油漆'],
            [1, '', '三、抹灰面油漆'], [1, 'v', '四、涂料、裱糊'], [2, '', '1.喷塑'], [2, '', '2.喷(刷)涂料'],
            [2, '', '3.裱糊'], [0, 'v', '第十章其他工程']
        ];
        const indents = ['left-[62px]', 'left-[81px]', 'left-[101px]'];
        const marks = ['left-[46px]', 'left-[66px]', 'left-[86px]'];
        const dots = ['left-[52px]', 'left-[71px]', 'left-[91px]'];
        document.getElementById('tree').insertAdjacentHTML('beforeend', tree.map(([lvl, mark, label, sel]) => `
            <div class="relative h-[15.95px] whitespace-nowrap">
                ${mark === '>' ? `<svg class="absolute ${marks[lvl]} top-[3px] w-[9px] h-[10px]" viewBox="0 0 9 10"><path d="M2 1l4 4-4 4" fill="none" stroke="#a6a6a6" stroke-width="2"/></svg>` : ''}
                ${mark === 'v' ? `<svg class="absolute ${marks[lvl]} top-[3px] w-[9px] h-[10px]" viewBox="0 0 9 10"><path d="M.5 3l4 4 4-4" fill="none" stroke="#444" stroke-width="2"/></svg>` : ''}
                ${mark === '' ? `<span class="absolute ${dots[lvl]} top-[8px] w-[8px] border-b border-dotted border-[#888]"></span>` : ''}
                <span class="absolute ${indents[lvl]} top-0 pr-[40px] ${sel ? 'bg-[#cce4f7]' : ''}">${mix(label)}</span>
            </div>`).join(''));

        // query results
        const quota = [
            ['A17-162', '门窗贴脸 宽(mm) 60~80', '100m', '1933.97', '1693.55'],
            ['A17-163', '门窗贴脸 宽(mm) 80~100', '100m', '2123.25', '1880.93'],
            ['A17-164', '门窗贴脸 宽(mm) 100~120', '100m', '2470.12', '2192.41'],
            ['A17-165', '硬木筒子板 带木筋', '100m2', '13327.06', '11808.37'],
            ['A17-166', '硬木筒子板 不带木筋', '100m2', '8658.49', '7679.01'],
            ['A17-167', '筒子板 贴装饰面板 木芯板基层(不带木筋)', '100m2', '11414.6', '10235.32']
        ];
        document.getElementById('quotaRows').innerHTML = quota.map(([code, name, unit, tax, net], i) => `
            <tr class="h-[19px]">
                <td class="border border-[#bbb] pt-[1px] leading-[15px] text-center ${mono} ${i === 0 ? 'bg-[#fbd38a]' : 'bg-[#f0f0f0]'}">${i + 1}</td>
                <td class="border border-[#bbb] pt-[1px] leading-[15px] pl-[2px] ${mono}">${code}</td>
                <td class="border border-[#bbb] pt-[1px] leading-[15px] pl-[2px] whitespace-nowrap ${i === 0 ? 'bg-[#d5e8f7]' : ''}">${mix(name)}</td>
                <td class="border border-[#bbb] pt-[1px] leading-[15px] pl-[2px] ${mono}">${unit}</td>
                <td class="border border-[#bbb] pt-[1px] leading-[15px] pr-[3px] text-right ${mono}">${tax}</td>
                <td class="border border-[#bbb] pt-[1px] leading-[15px] pr-[3px] text-right ${mono}">${net}</td>
            </tr>`).join('');
    </script>
</body>
</html>
